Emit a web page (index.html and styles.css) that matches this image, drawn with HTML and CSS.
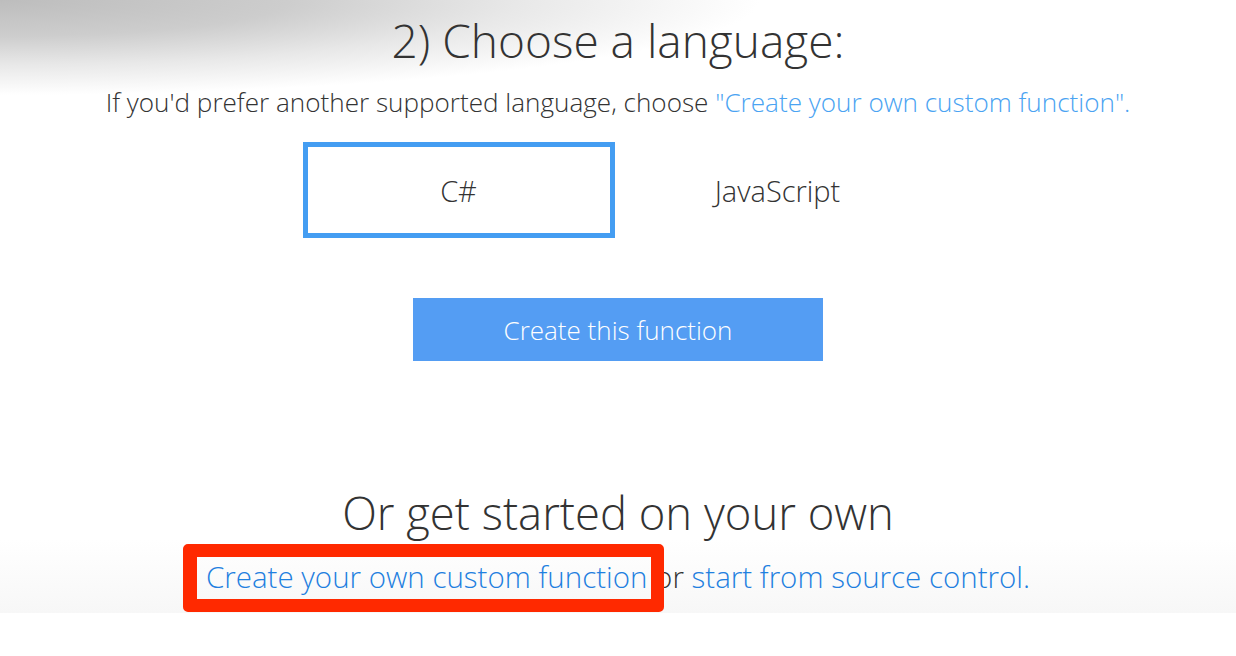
FILE: index.html
```html
<!DOCTYPE html>
<html lang="en">
<head>
<meta charset="utf-8">
<title>Choose a language</title>
<link rel="stylesheet" href="styles.css">
</head>
<body>
<main class="page">
  <h1 class="title">2) Choose a language:</h1>
  <p class="hint">If you'd prefer another supported language, choose <a class="hint-link" href="#">"Create your own custom function".</a></p>
  <div class="langs">
    <div class="lang lang-selected">C#</div>
    <div class="lang">JavaScript</div>
  </div>
  <button class="create-btn" type="button">Create this function</button>
  <h2 class="own-title">Or get started on your own</h2>
  <p class="own-line"><span class="marked"><a class="own-link" href="#">Create your own custom function</a></span> or <a class="own-link" href="#">start from source control.</a></p>
</main>
</body>
</html>
```
FILE: styles.css
```css
html, body {
  margin: 0;
  padding: 0;
  background: #ffffff;
}
body {
  font-family: "Open Sans", "Noto Sans", sans-serif;
  font-weight: 300;
  color: #333333;
  height: 656px;
  overflow: hidden;
}
.page {
  position: relative;
  height: 613px;
  box-sizing: border-box;
  padding-top: 10px;
  display: flex;
  flex-direction: column;
  align-items: center;
  background: linear-gradient(to bottom, #ffffff 0, #ffffff 540px, #f7f7f7 613px);
}
.page::before {
  content: "";
  position: absolute;
  left: 0;
  top: 0;
  width: 820px;
  height: 110px;
  background: radial-gradient(ellipse 760px 95px at 0 0, #bdbdbd 0%, #cdcdcd 38%, #e8e8e8 68%, rgba(255,255,255,0) 100%);
  pointer-events: none;
}
.title {
  position: relative;
  margin: 0;
  font-size: 46px;
  font-weight: 300;
  line-height: 60px;
  color: #333333;
}
.hint {
  margin: 15px 0 0;
  font-size: 26.1px;
  line-height: 34px;
  color: #333333;
}
.hint-link {
  color: #4aa3f2;
  text-decoration: none;
}
.langs {
  margin-top: 23px;
  display: flex;
  gap: 7px;
}
.lang {
  width: 312px;
  height: 96px;
  box-sizing: border-box;
  border: 5px solid transparent;
  display: flex;
  align-items: center;
  justify-content: center;
  font-size: 29px;
  color: #333333;
}
.lang-selected {
  border-color: #449df2;
}
.create-btn {
  margin-top: 60px;
  width: 410px;
  height: 63px;
  border: 0;
  background: #549df3;
  color: #ffffff;
  font-family: inherit;
  font-weight: 300;
  font-size: 26px;
  padding: 0;
}
.own-title {
  margin: 121px 0 0;
  font-size: 45.4px;
  font-weight: 300;
  line-height: 60px;
  color: #333333;
}
.own-line {
  margin: 15px 0 0;
  font-size: 29.5px;
  line-height: 40px;
  color: #333333;
}
.own-link {
  color: #1f80e0;
  text-decoration: none;
}
.marked {
  position: relative;
}
.marked::after {
  content: "";
  position: absolute;
  left: -23px;
  right: -17px;
  top: -12px;
  bottom: -15px;
  border: 13px solid #ff2900;
  border-left-width: 14px;
  border-radius: 5px;
  pointer-events: none;
}
```
